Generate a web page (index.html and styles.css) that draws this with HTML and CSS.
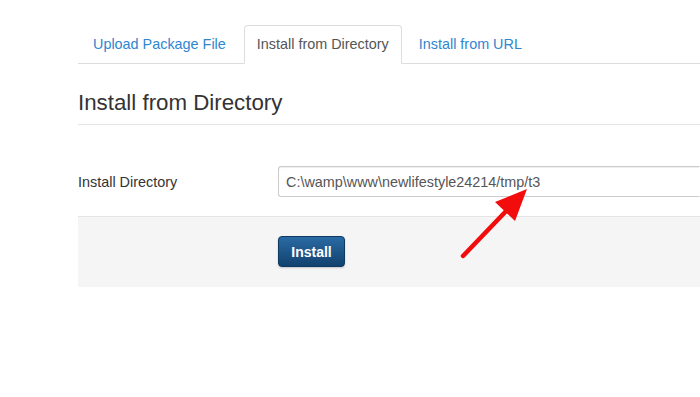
FILE: index.html
```html
<!DOCTYPE html>
<html lang="en">
<head>
    <meta charset="UTF-8">
    <title>Extension Manager: Install</title>
    <link rel="stylesheet" href="styles.css">
</head>
<body>

    <div class="page">
        <ul class="nav-tabs">
            <li><a href="#">Upload Package File</a></li>
            <li class="active"><a href="#">Install from Directory</a></li>
            <li><a href="#">Install from URL</a></li>
        </ul>

        <fieldset class="install-form">
            <legend>Install from Directory</legend>

            <div class="control-group">
                <label for="install_directory">Install Directory</label>
                <input type="text" id="install_directory" value="C:\wamp\www\newlifestyle24214/tmp/t3">
            </div>

            <div class="form-actions">
                <button type="button" class="btn-primary">Install</button>
            </div>
        </fieldset>
    </div>

    <!-- red pointer drawn over the screenshot -->
    <svg class="arrow" width="90" height="90" viewBox="0 0 90 90">
        <line x1="6" y1="80" x2="52" y2="32" stroke="#f20c0c" stroke-width="4.5" stroke-linecap="round"/>
        <polygon points="70,13 38,26 58,45" fill="#f20c0c"/>
    </svg>

</body>
</html>
```

FILE: styles.css
```css
body {
    margin: 0;
    background-color: #ffffff;
    font-family: 'Liberation Sans', Arial, sans-serif;
    color: #333333;
    overflow: hidden;
    position: relative;
    height: 397px;
}

.page {
    padding: 25px 0 0 78px;
}

.nav-tabs {
    display: flex;
    list-style: none;
    margin: 0;
    padding: 0;
    border-bottom: 1px solid #dddddd;
}

.nav-tabs li {
    margin-right: 2px;
    margin-bottom: -1px;
}

.nav-tabs a {
    display: block;
    padding: 0 15px 0 14px;
    height: 37px;
    line-height: 37px;
    font-size: 14.4px;
    color: #2f86d0;
    text-decoration: none;
    border: 1px solid transparent;
    border-radius: 4px 4px 0 0;
}

.nav-tabs .active a {
    color: #555555;
    background-color: #ffffff;
    border-color: #dddddd #dddddd transparent;
    padding: 0 12px;
}

.install-form {
    border: 0;
    margin: 0;
    padding: 0;
    min-width: 0;
}

.install-form legend {
    display: block;
    width: 100%;
    padding: 0;
    margin: 0;
    padding-top: 24px;
    height: 36px;
    font-size: 22.3px;
    line-height: 30px;
    color: #333333;
    border-bottom: 1px solid #e5e5e5;
}

.control-group {
    display: flex;
    align-items: center;
    margin-top: 41px;
    height: 31px;
}

.control-group label {
    flex: none;
    width: 200px;
    font-size: 14.4px;
    color: #333333;
}

/* the field runs on past the right edge of the shot */
.control-group input {
    flex: 1;
    min-width: 0;
    height: 31px;
    box-sizing: border-box;
    padding: 0 7px;
    font-family: 'Liberation Sans', Arial, sans-serif;
    font-size: 14.4px;
    color: #555555;
    border: 1px solid #cccccc;
    border-right-color: transparent;
    border-radius: 3px 0 0 3px;
    box-shadow: inset 0 1px 1px rgba(0, 0, 0, 0.075);
}

.form-actions {
    margin-top: 19px;
    padding: 19px 0 20px 200px;
    background-color: #f5f5f5;
    border-top: 1px solid #e5e5e5;
}

.btn-primary {
    display: block;
    width: 67px;
    height: 31px;
    padding: 0;
    font-family: 'Liberation Sans', Arial, sans-serif;
    font-size: 14px;
    font-weight: bold;
    color: #ffffff;
    background-color: #1e5a91;
    background-image: linear-gradient(to bottom, #2a6aa4, #12426f);
    border: 1px solid #0f3a62;
    border-radius: 4px;
    box-shadow: 0 1px 2px rgba(0, 0, 0, 0.2);
}

.arrow {
    position: absolute;
    left: 457px;
    top: 176px;
}
```
